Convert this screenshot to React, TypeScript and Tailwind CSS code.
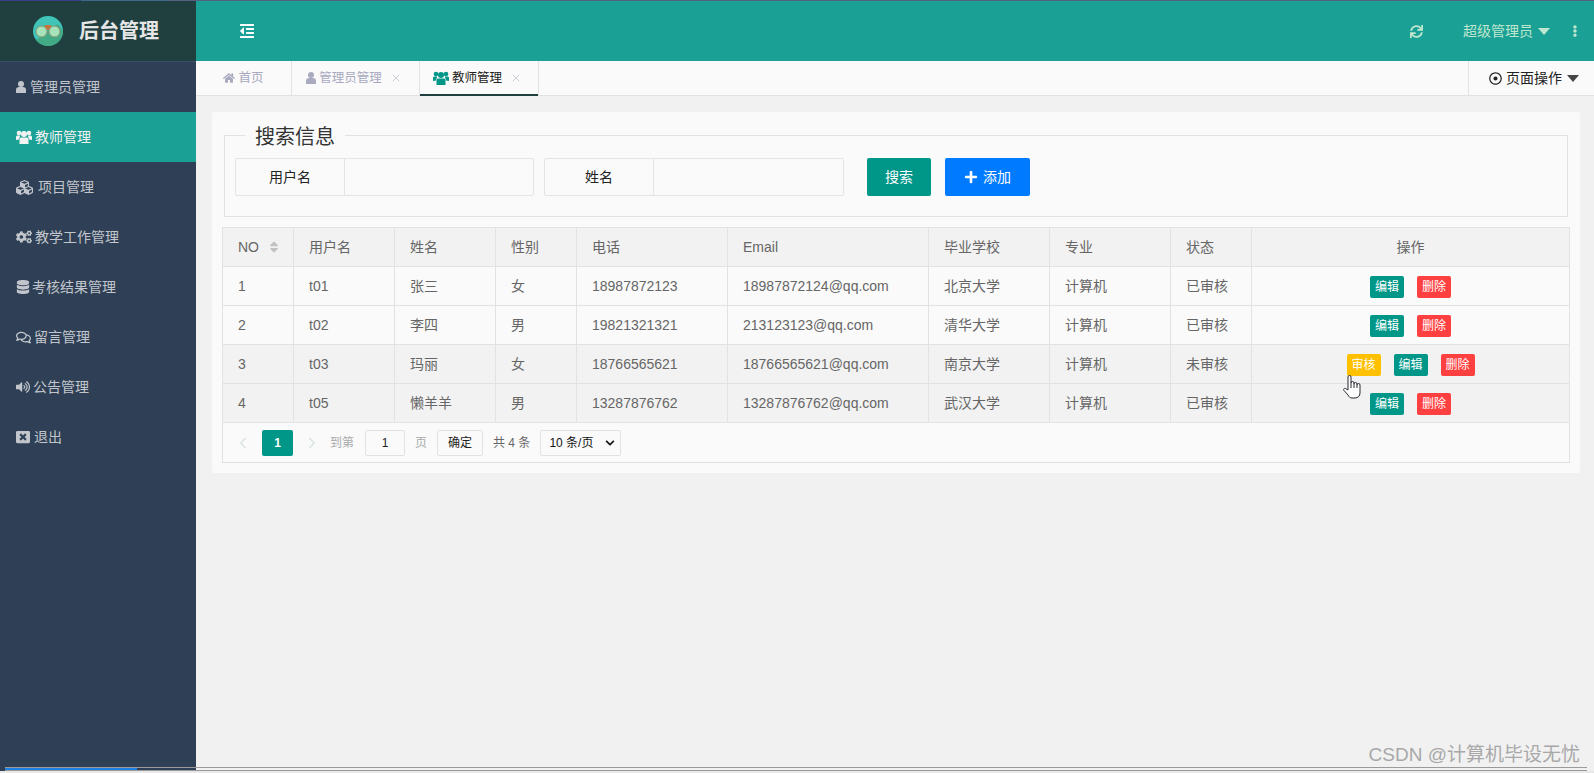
import type { ReactNode } from "react";
import {
  FaChevronDown,
  FaCogs,
  FaCubes,
  FaDatabase,
  FaEllipsisV,
  FaHome,
  FaOutdent,
  FaPlus,
  FaRegComments,
  FaRegDotCircle,
  FaSort,
  FaSync,
  FaVolumeUp,
  FaWindowClose,
} from "react-icons/fa";
import { FiChevronLeft, FiChevronRight, FiX } from "react-icons/fi";

function UserIcon() {
  return (
    <svg width="10" height="12" viewBox="0 0 10 12" fill="currentColor" className="block">
      <circle cx="5" cy="3" r="3" />
      <path d="M0 12V8.500C0 7 1.500 6 3 6h4c1.500 0 3 1 3 2.500V12Z" />
    </svg>
  );
}

function UsersIcon() {
  return (
    <svg width="16" height="14" viewBox="0 0 16 14" fill="currentColor" className="block">
      <circle cx="3" cy="3" r="2.300" />
      <circle cx="13" cy="3" r="2.300" />
      <circle cx="8" cy="4" r="3" />
      <path d="M0 10V7c0-1 .8-1.500 1.700-1.500h2.500L3 9.500Z" />
      <path d="M16 10V7c0-1-.8-1.500-1.700-1.500h-2.500L13 9.500Z" />
      <path d="M3.500 14V9.500C3.500 8 4.500 7.500 5.500 7.500h5c1 0 2 .5 2 2V14Z" />
    </svg>
  );
}

function Caret({ color }: { color: string }) {
  return (
    <svg width="12" height="7" viewBox="0 0 12 7" className={`${color} block`} fill="currentColor">
      <path d="M0 0h12L6 7z" />
    </svg>
  );
}

const menu = [
  { label: "管理员管理", icon: <UserIcon />, w: "w-[14px]" },
  { label: "教师管理", icon: <UsersIcon />, w: "w-[19px]", active: true },
  { label: "项目管理", icon: <FaCubes size={17} />, w: "w-[22px]" },
  { label: "教学工作管理", icon: <FaCogs size={16} />, w: "w-[19px]" },
  { label: "考核结果管理", icon: <FaDatabase size={14} />, w: "w-[16px]" },
  { label: "留言管理", icon: <FaRegComments size={15} />, w: "w-[18px]" },
  { label: "公告管理", icon: <FaVolumeUp size={14} />, w: "w-[17px]" },
  { label: "退出", icon: <FaWindowClose size={14} />, w: "w-[18px]" },
];

const rows = [
  { no: "1", user: "t01", name: "张三", sex: "女", tel: "18987872123", email: "18987872124@qq.com", school: "北京大学", status: "已审核" },
  { no: "2", user: "t02", name: "李四", sex: "男", tel: "19821321321", email: "213123123@qq.com", school: "清华大学", status: "已审核" },
  { no: "3", user: "t03", name: "玛丽", sex: "女", tel: "18766565621", email: "18766565621@qq.com", school: "南京大学", status: "未审核", pending: true },
  { no: "4", user: "t05", name: "懒羊羊", sex: "男", tel: "13287876762", email: "13287876762@qq.com", school: "武汉大学", status: "已审核" },
];

const heads = ["用户名", "姓名", "性别", "电话", "Email", "毕业学校", "专业", "状态"];

function Logo() {
  return (
    <svg width="30" height="30" viewBox="0 0 30 30">
      <circle cx="15" cy="15" r="15" fill="#3fc4b8" />
      <path d="M3 24 L25 8 L30 15 A15 15 0 0 1 3 24Z" fill="#42ab86" />
      <path d="M12 9 L18 9 L19 14 L11 14Z" fill="#c9743f" />
      <circle cx="8.500" cy="15.500" r="5.500" fill="#a6e3b8" stroke="#8a8f70" />
      <circle cx="21.500" cy="15.500" r="5.500" fill="#a6e3b8" stroke="#8a8f70" />
    </svg>
  );
}

function HandCursor() {
  return (
    <svg width="18" height="24" viewBox="0 0 18 24" className="absolute left-[-4px] top-[21px]">
      <path
        d="M5 15V2a1.500 1.500 0 0 1 3 0V8a1.500 1.500 0 0 1 3 0V9a1.500 1.500 0 0 1 3 0V10a1.500 1.500 0 0 1 3 0V18c0 3-2 5-5 5H9c-2 0-3-1-4-3L1 15.500c-1-1 0-2.500 1.500-2L5 15Z"
        fill="#fff"
        stroke="#2b2b33"
        strokeWidth="1"
      />
      <path d="M8 8v5M11 9v4M14 10v3" stroke="#2b2b33" strokeWidth="1" fill="none" />
    </svg>
  );
}

function Tab({ icon, label, width, active, close }: { icon: ReactNode; label: string; width: string; active?: boolean; close?: boolean }) {
  return (
    <div
      className={`${width} relative flex h-full items-center justify-center gap-[3px] border-r border-[#e2e2e2] text-[12.5px] ${
        active ? "text-[#222]" : "text-[#a9a9c0]"
      } ${close ? "pr-[3px]" : ""}`}
    >
      <span className={active ? "text-[#009688]" : "text-[#a9a9c0]"}>{icon}</span>
      <span>{label}</span>
      {close && <FiX size={12} className="ml-[5px] text-[#cfcfd8]" />}
      {active && <span className="absolute inset-x-0 bottom-[-1px] h-[2px] bg-[#204040]" />}
    </div>
  );
}

function SearchField({ label, width }: { label: string; width: string }) {
  return (
    <div className={`${width} flex h-[38px] rounded-[2px] border border-[#e4e4e4] text-[14px] text-[#222]`}>
      <div className="flex w-[109px] items-center justify-center border-r border-[#e4e4e4]">{label}</div>
      <input className="min-w-0 flex-1 outline-none" />
    </div>
  );
}

function SmallButton({ color, children }: { color: string; children: ReactNode }) {
  return (
    <button className={`${color} flex h-[22px] w-[34px] items-center justify-center rounded-[2px] text-[12px] text-white`}>
      {children}
    </button>
  );
}

export default function App() {
  const cell = "border border-[#e2e2e2] text-[14px] font-normal text-[#666]";
  const td = `${cell} pl-[15px]`;
  return (
    <div className="relative flex h-screen flex-col overflow-hidden bg-[#f1f1f1] font-['Liberation_Sans','Noto_Sans_CJK_SC',sans-serif]">
      {/* top edge of the window */}
      <div className="flex h-px flex-none">
        <div className="w-[81px] bg-[#3c3c8c]" />
        <div className="w-[86px] bg-[#3d6a8a]" />
        <div className="flex-1 bg-[#55607e]" />
      </div>

      <div className="flex min-h-0 flex-1">
        {/* Sidebar */}
        <aside className="flex w-[196px] flex-none flex-col bg-[#2f4056]">
          <div className="flex h-[61px] flex-none items-center border-b border-[#3a4f6a] bg-[#204040] pl-[33px]">
            <Logo />
            <span className="ml-[16px] text-[20px] font-bold text-[#e6e6e6]">后台管理</span>
          </div>
          <nav>
            {menu.map((m) => (
              <div
                key={m.label}
                className={`flex h-[50px] items-center pl-4 text-[14px] ${
                  m.active ? "bg-[#1aa094] text-[#f2f2f2]" : "text-[#c2c6cc]"
                }`}
              >
                <span className={`${m.w} flex-none`}>{m.icon}</span>
                <span>{m.label}</span>
              </div>
            ))}
          </nav>
        </aside>

        <div className="flex min-w-0 flex-1 flex-col">
          {/* Header */}
          <header className="flex h-[60px] flex-none items-center bg-[#1aa094] pl-[43px] pr-[13px]">
            <FaOutdent size={16} className="text-white" />
            <div className="ml-auto flex items-center text-[14px] text-[#bfe6cf]">
              <FaSync size={13} />
              <span className="ml-[40px]">超级管理员</span>
              <span className="ml-[5px]">
                <Caret color="text-[#bfe6cf]" />
              </span>
              <FaEllipsisV size={12} className="ml-[19px]" />
            </div>
          </header>

          {/* Tabs */}
          <div className="flex h-[35px] flex-none items-stretch border-b border-[#e2e2e2] bg-[#fafafa]">
            <Tab width="w-[96px]" icon={<FaHome size={12} />} label="首页" />
            <Tab width="w-[128px]" icon={<UserIcon />} label="管理员管理" close />
            <Tab width="w-[119px]" icon={<UsersIcon />} label="教师管理" close active />
            <div className="ml-auto flex w-[126px] items-center border-l border-[#e2e2e2] pl-[20px] text-[14px] text-[#222]">
              <FaRegDotCircle size={13} />
              <span className="ml-[4px]">页面操作</span>
              <span className="ml-[5px]">
                <Caret color="text-[#444]" />
              </span>
            </div>
          </div>

          {/* Content */}
          <main className="py-4 pl-4 pr-[14px]">
            <div className="rounded-[2px] bg-[#fafafa] px-[10px] pb-[10px] pt-[9px]">
              <fieldset className="mx-[2px] h-[96px] border border-[#e2e2e2] pl-[10px]">
                <legend className="ml-[10px] px-[10px] text-[20px] leading-[28px] text-[#333]">
                  <span className="relative top-[2px]">搜索信息</span>
                </legend>
                <div className="flex items-center pt-[9px]">
                  <SearchField label="用户名" width="w-[299px]" />
                  <div className="w-[10px]" />
                  <SearchField label="姓名" width="w-[300px]" />
                  <button className="ml-[23px] h-[38px] w-[64px] rounded-[2px] bg-[#009688] text-[14px] text-white">搜索</button>
                  <button className="ml-[14px] flex h-[38px] w-[85px] items-center justify-center gap-[5px] rounded-[2px] bg-[#007bff] text-[14px] text-white">
                    <FaPlus size={14} />
                    添加
                  </button>
                </div>
              </fieldset>

              <div className="mt-[10px] w-[1348px] border border-t-0 border-[#e2e2e2]">
                <table className="w-[1347px] -ml-px table-fixed border-collapse">
                  <colgroup>
                    <col className="w-[71px]" />
                    <col className="w-[101px]" />
                    <col className="w-[101px]" />
                    <col className="w-[81px]" />
                    <col className="w-[151px]" />
                    <col className="w-[201px]" />
                    <col className="w-[121px]" />
                    <col className="w-[121px]" />
                    <col className="w-[81px]" />
                    <col className="w-[318px]" />
                  </colgroup>
                  <thead>
                    <tr className="h-[39px] bg-[#f2f2f2]">
                      <th className={`${td} text-left`}>
                        <span className="flex items-center gap-[8px]">
                          NO
                          <FaSort size={14} className="text-[#c2c2c2]" />
                        </span>
                      </th>
                      {heads.map((h) => (
                        <th key={h} className={`${td} text-left`}>
                          {h}
                        </th>
                      ))}
                      <th className={`${cell} text-center`}>操作</th>
                    </tr>
                  </thead>
                  <tbody>
                    {rows.map((r, i) => (
                      <tr key={r.no} className={`h-[39px] ${i > 1 ? "bg-[#f2f2f2]" : ""}`}>
                        <td className={td}>{r.no}</td>
                        <td className={td}>{r.user}</td>
                        <td className={td}>{r.name}</td>
                        <td className={td}>{r.sex}</td>
                        <td className={td}>{r.tel}</td>
                        <td className={td}>{r.email}</td>
                        <td className={td}>{r.school}</td>
                        <td className={td}>计算机</td>
                        <td className={td}>{r.status}</td>
                        <td className="border border-[#e2e2e2]">
                          <div className="flex items-center justify-center gap-[13px] pt-px">
                            {r.pending && (
                              <div className="relative">
                                <SmallButton color="bg-[#ffc000]">审核</SmallButton>
                                <HandCursor />
                              </div>
                            )}
                            <SmallButton color="bg-[#009688]">编辑</SmallButton>
                            <SmallButton color="bg-[#ff4040]">删除</SmallButton>
                          </div>
                        </td>
                      </tr>
                    ))}
                  </tbody>
                </table>

                {/* Pagination */}
                <div className="flex h-[39px] items-center pl-[11px] text-[12px] text-[#666]">
                  <FiChevronLeft size={18} className="text-[#d8e4e2]" />
                  <span className="ml-[10px] flex h-[26px] w-[31px] items-center justify-center rounded-[2px] bg-[#009688] font-bold text-white">1</span>
                  <FiChevronRight size={18} className="ml-[10px] text-[#d8e4e2]" />
                  <span className="ml-[9px] text-[#aaa]">到第</span>
                  <span className="ml-[11px] flex h-[26px] w-[40px] items-center justify-center rounded-[2px] border border-[#e2e2e2] text-[#222]">1</span>
                  <span className="ml-[10px] text-[#aaa]">页</span>
                  <button className="ml-[10px] h-[26px] w-[46px] rounded-[2px] border border-[#e2e2e2] text-[#222]">确定</button>
                  <span className="ml-[10px]">共 4 条</span>
                  <span className="ml-[10px] flex h-[26px] w-[81px] items-center justify-between rounded-[2px] border border-[#e2e2e2] pl-[8px] pr-[5px] text-[#111]">
                    10 条/页
                    <FaChevronDown size={10} />
                  </span>
                </div>
              </div>
            </div>
          </main>
        </div>
      </div>

      <div className="h-[2px] flex-none bg-[#e8e8e8]" />

      {/* Browser scrollbar and image watermark lying over the page */}
      <div className="absolute bottom-[2px] left-[5px] right-[7px] h-[4px] border-y border-[#9a9a9a]">
        <div className="h-full w-[132px] bg-[#1e7fe0]" />
      </div>
      <div className="absolute bottom-[6px] right-[14px] text-[19px] leading-[24px] text-[#a8a8a8]">CSDN @计算机毕设无忧</div>
    </div>
  );
}
